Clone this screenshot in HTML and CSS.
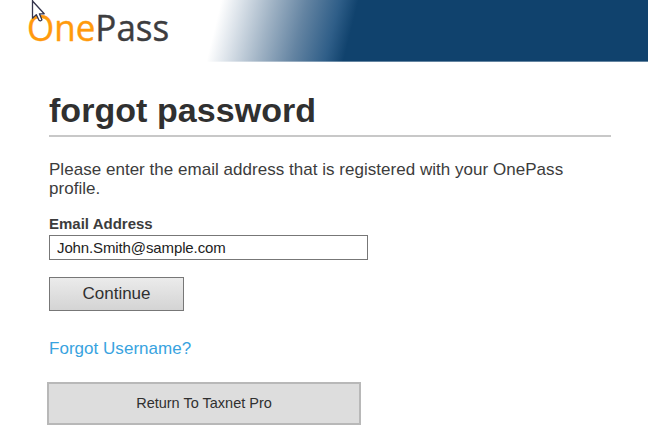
FILE: index.html
```html
<!DOCTYPE html>
<html lang="en">
<head>
    <meta charset="UTF-8">
    <meta name="viewport" content="width=device-width, initial-scale=1.0">
    <title>OnePass - Forgot Password</title>
    <link rel="stylesheet" href="styles.css">
</head>
<body>
    <header class="header">
        <div class="logo"><span class="logo-one">One</span>Pass</div>
        <svg class="cursor" width="16" height="24" viewBox="0 0 16 24">
            <path d="M1.5 -1V18.2L5.3 14.6L8 20.2Q9.5 21.6 10.9 19.8L8.4 13.8H13.2L1.5 1Z" fill="#fff" stroke="#34344c" stroke-width="1.3" stroke-linejoin="round"/>
        </svg>
    </header>

    <main class="container">
        <h1>forgot password</h1>
        <p class="intro">Please enter the email address that is registered with your OnePass profile.</p>

        <form class="form">
            <label for="email">Email Address</label>
            <input type="text" id="email" value="John.Smith@sample.com">
            <button type="button" class="btn btn-continue">Continue</button>
        </form>

        <a class="link" href="#">Forgot Username?</a>
        <button type="button" class="btn btn-return">Return To Taxnet Pro</button>
    </main>
</body>
</html>
```
FILE: styles.css
```css
* {
    box-sizing: border-box;
    margin: 0;
    padding: 0;
}

body {
    background: #fff;
    color: #3c3c3c;
    font-family: "Liberation Sans", Arial, sans-serif;
    font-size: 17px;
    overflow: hidden;
}

.header {
    position: relative;
    width: 648px;
    height: 62px;
    padding-left: 26px;
    background: linear-gradient(104deg, #fff 215px, #dce3ea 234px, #9fb2c4 266px, #6484a2 298px, #2f5e88 330px, #10426d 348px);
}

.header::after {
    content: "";
    position: absolute;
    left: 0;
    right: 0;
    bottom: 0;
    height: 1px;
    background: rgba(255, 255, 255, 0.35);
}

.logo {
    display: inline-block;
    font-family: "Open Sans", "Noto Sans", sans-serif;
    font-size: 36px;
    line-height: 55px;
    color: #3d3d3f;
    white-space: nowrap;
    transform: scaleX(0.972);
    transform-origin: left;
    margin-left: 1px;
    -webkit-text-stroke: 0.4px;
}

.logo-one {
    color: #ff9a0c;
}

.cursor {
    position: absolute;
    left: 31px;
    top: 0;
}

.container {
    display: flex;
    flex-direction: column;
    align-items: flex-start;
    width: 562px;
    margin-left: 49px;
    padding-top: 26px;
}

h1 {
    width: 100%;
    height: 49px;
    padding-top: 1px;
    border-bottom: 2px solid #c8c8c8;
    font-size: 34px;
    line-height: 42px;
    letter-spacing: 0.05px;
    color: #303030;
}

.intro {
    width: 540px;
    margin-top: 23px;
    line-height: 19px;
    letter-spacing: 0.03px;
}

.form {
    display: flex;
    flex-direction: column;
    align-items: flex-start;
    margin-top: 16px;
}

label {
    font-size: 15px;
    font-weight: bold;
    line-height: 20px;
}

input {
    width: 319px;
    height: 25px;
    margin-top: 1px;
    padding: 0 7px 1px;
    border: 1px solid #777;
    background: #fff;
    color: #222;
    font: 15px "Liberation Sans", Arial, sans-serif;
    letter-spacing: -0.12px;
}

.btn {
    color: #303030;
    font-family: inherit;
    cursor: pointer;
}

.btn-continue {
    width: 135px;
    height: 34px;
    margin-top: 17px;
    border: 1px solid #777;
    background: linear-gradient(#ebebeb, #d4d4d4);
    font-size: 17px;
}

.link {
    margin-top: 28px;
    color: #38a3e0;
    line-height: 20px;
    letter-spacing: 0.03px;
    text-decoration: none;
}

.btn-return {
    width: 314px;
    height: 43px;
    margin: 23px 0 0 -2px;
    padding-bottom: 2px;
    border: 2px solid #b8b8b8;
    background: #ddd;
    font-size: 14.5px;
}
```
